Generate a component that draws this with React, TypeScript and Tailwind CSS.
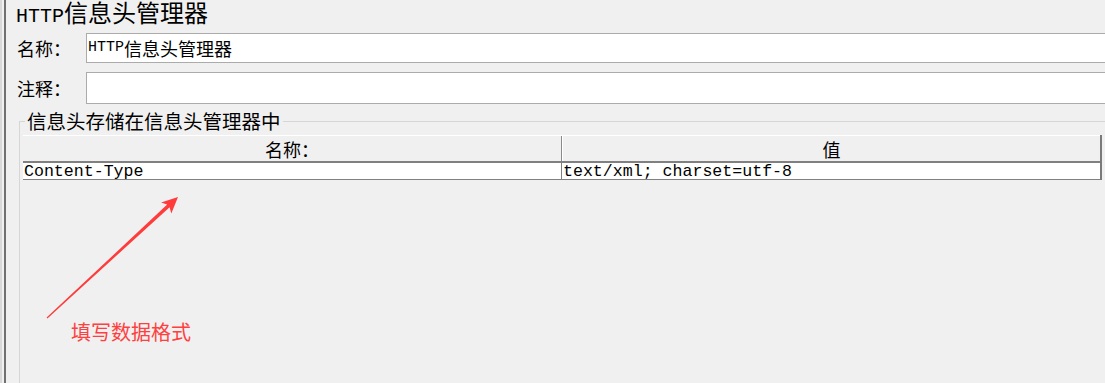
const cjk = "font-['Noto_Sans_CJK_SC',sans-serif]"
const mono = "font-['Liberation_Mono','Noto_Sans_CJK_SC',monospace]"

const Arrow = () => (
	<svg
		className="pointer-events-none absolute left-0 top-0"
		width={1105}
		height={383}
		viewBox="0 0 1105 383"
	>
		<polygon
			fill="#ff3b3b"
			points="178,197 171.3,213.4 169.6,207.2 47.4,318.5 46.6,317.5 167.2,204.6 161.1,202.4"
		/>
	</svg>
)

const App = () => {
	return (
		<div
			className={`relative flex h-[383px] w-[1105px] overflow-hidden bg-[#f0f0f0] text-black ${cjk}`}
		>
			<div className="w-[2px] bg-[#d9d9d9]"></div>
			<div className="w-[2px]"></div>
			<div className="w-[2px] bg-[#707070]"></div>

			<div className="flex flex-1 flex-col">
				<div className="h-[33px] pl-[10px] leading-[24px]">
					<span className={`${mono} text-[20px]`}>HTTP</span>
					<span className="text-[24px]">信息头管理器</span>
				</div>

				<div className="flex h-[30px] items-center">
					<div className="w-[80px] pl-[11px] text-[18px] leading-[20px]">
						名称：
					</div>
					<div className="flex h-full flex-1 items-center border border-r-0 border-[#ababab] bg-white pl-[1px] leading-[20px]">
						<span className={`${mono} text-[15px]`}>HTTP</span>
						<span className="text-[18px]">信息头管理器</span>
					</div>
				</div>

				<div className="mt-[9px] flex h-[32px] items-center">
					<div className="w-[80px] pl-[11px] text-[18px] leading-[20px]">
						注释：
					</div>
					<div className="h-full flex-1 border border-r-0 border-[#ababab] bg-white"></div>
				</div>

				<fieldset className="ml-[13px] mt-[6px] flex-1 border-l border-t border-[#d6d6d6] pl-[3px] pr-[3px]">
					<legend className="ml-[2px] px-[2px] text-[19.5px] leading-[22px]">
						信息头存储在信息头管理器中
					</legend>
					<div className="mt-[3px] border-r-2 border-[#7a7a7a]">
						<div className="flex h-[28px] border-b-2 border-t border-b-[#808080] border-t-white">
							<div className="flex w-[539px] items-center justify-center border-r border-[#8a8a8a] text-[18px] leading-[20px]">
								名称：
							</div>
							<div className="flex flex-1 items-center justify-center border-l border-white text-[18px] leading-[20px]">
								值
							</div>
						</div>
						<div className="flex h-[17px] border-b border-[#808080] bg-white">
							<div
								className={`w-[539px] border-r border-[#808080] pl-[1px] ${mono} text-[16.6px] leading-[17px]`}
							>
								Content-Type
							</div>
							<div className={`flex-1 pl-[1px] ${mono} text-[16.6px] leading-[17px]`}>
								text/xml; charset=utf-8
							</div>
						</div>
					</div>
				</fieldset>
			</div>

			<Arrow />
			<div className="absolute left-[71px] top-[321px] text-[20px] leading-[22px] text-[#ff4040]">
				填写数据格式
			</div>
		</div>
	)
}

export default App
